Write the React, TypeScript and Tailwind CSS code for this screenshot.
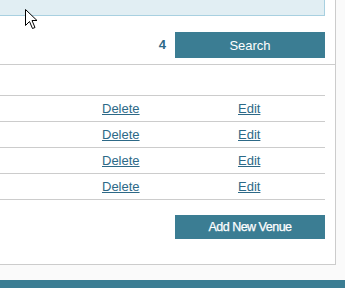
import React from "react";

const rows = [0, 1, 2, 3];

export default function App() {
  return (
    <div className="relative w-[345px] h-[288px] overflow-hidden bg-[#fafafa] font-['Liberation_Sans',Arial,sans-serif]">
      <div className="w-[336px] h-[265px] bg-white border-r border-b border-[#cccccc] flex flex-col">
        <div className="w-[325px] h-[16px] bg-[#e1eef3] border-r border-b border-[#a8d0e0]" />
        <div className="mt-[16px] flex justify-end items-center pr-[10px] h-[26px]">
          <span className="text-[13px] font-bold text-[#2d6987] mr-[9px]">4</span>
          <button className="w-[150px] h-[26px] bg-[#3b7d93] text-white text-[13px] leading-none">Search</button>
        </div>
        <div className="mt-[6px] border-t border-[#cccccc]" />
        <div className="w-[325px] h-[30px]" />
        <div className="w-[325px]">
          {rows.map((r) => (
            <div key={r} className="flex items-center h-[26px] border-t border-[#cccccc] text-[13px] text-[#2d6987]">
              <div className="w-[102px]" />
              <a href="#" className="w-[136px] underline">Delete</a>
              <a href="#" className="underline">Edit</a>
            </div>
          ))}
          <div className="border-t border-[#cccccc]" />
        </div>
        <div className="mt-[15px] w-[325px] flex justify-end">
          <button className="w-[150px] h-[24px] bg-[#3b7d93] text-white text-[12.5px] tracking-[-0.5px] leading-none [-webkit-text-stroke:0.25px_white]">Add New Venue</button>
        </div>
      </div>
      <div className="mt-[15px] h-[8px] bg-[#3b7d93]" />
      <svg className="absolute left-[25px] top-[9px]" width="13" height="21" viewBox="0 0 13 21">
        <path d="M0.5 0.5 L0.5 16.5 L4.5 12.5 L7.5 19.5 L10 18.5 L7 11.5 L12 11.5 Z" fill="white" stroke="black" strokeWidth="1" strokeLinejoin="miter" />
      </svg>
    </div>
  );
}
